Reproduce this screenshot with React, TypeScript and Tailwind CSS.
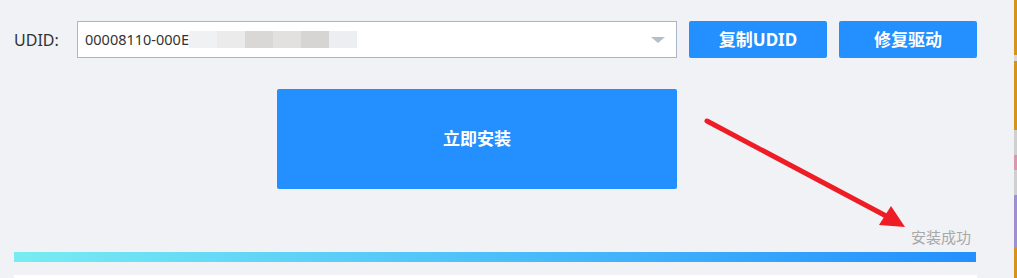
const font = { fontFamily: '"Noto Sans", "Noto Sans CJK SC", sans-serif' };

// pixelated, masked part of the UDID
const blur = [
  "bg-[#f0f1f3]",
  "bg-[#ebebeb]",
  "bg-[#d9d8d7]",
  "bg-[#e2e1e0]",
  "bg-[#d6d5d4]",
  "bg-[#eceef1]",
];

export default function App() {
  return (
    <div className="w-[1017px] h-[278px] overflow-hidden flex bg-[#f0f2f6]" style={font}>
      {/* Main panel */}
      <div className="relative flex-1 pl-[14px] pr-[37px] pt-[21px]">
        {/* UDID row */}
        <div className="flex items-center h-[37px]">
          <span className="w-[63px] text-[16px] text-[#333]">UDID:</span>
          <div className="flex items-center w-[600px] h-[37px] bg-white border border-[#a9b6c8] pl-[7px] pr-[11px]">
            <span className="text-[14.5px] text-[#333]">00008110-000E</span>
            <div className="flex h-[17px]">
              {blur.map((c, i) => (
                <div key={i} className={`w-[28px] h-full ${c}`} />
              ))}
            </div>
            <div className="flex-1" />
            <div className="w-0 h-0 border-l-[7px] border-r-[7px] border-t-[6px] border-l-transparent border-r-transparent border-t-[#b7bec9]" />
          </div>
          <button className="ml-[12px] w-[138px] h-[37px] rounded-[2px] bg-[#248ffe] text-white text-[17px] font-bold">
            复制UDID
          </button>
          <button className="ml-[12px] w-[138px] h-[37px] rounded-[2px] bg-[#248ffe] text-white text-[17px] font-bold">
            修复驱动
          </button>
        </div>

        {/* Install button */}
        <div className="mt-[31px] ml-[263px]">
          <button className="w-[400px] h-[100px] rounded-[2px] bg-[#248ffe] text-white text-[17px] font-bold">
            立即安装
          </button>
        </div>

        {/* Status */}
        <div className="flex justify-end pr-[6px] mt-[38px] h-[20px] items-center">
          <span className="text-[15px] text-[#a8a8a8]">安装成功</span>
        </div>

        {/* Progress */}
        <div className="mt-[5px] h-[10px] w-[962px] bg-gradient-to-r from-[#78ecf2] to-[#248ffe]" />

        <div className="mt-[13px] h-[20px] w-[963px] bg-white" />

        {/* annotation arrow */}
        <svg className="absolute left-0 top-0 pointer-events-none" width="1014" height="278">
          <line x1="707" y1="121" x2="888" y2="217" stroke="#ee1c24" strokeWidth="5" strokeLinecap="round" />
          <polygon points="905,227 879,225 891,206" fill="#ee1c24" />
        </svg>
      </div>

      {/* Right window edge */}
      <div className="w-[3px] flex flex-col">
        <div className="h-[55px] bg-[#d6931b]" />
        <div className="h-[6px] bg-[#d9d9d9]" />
        <div className="h-[69px] bg-[#d6931b]" />
        <div className="h-[25px] bg-[#cfcfcf]" />
        <div className="h-[15px] bg-[#d996ad]" />
        <div className="h-[25px] bg-[#cfcfcf]" />
        <div className="h-[53px] bg-[#9f8fd0]" />
        <div className="flex-1 bg-[#d6931b]" />
      </div>
    </div>
  );
}
